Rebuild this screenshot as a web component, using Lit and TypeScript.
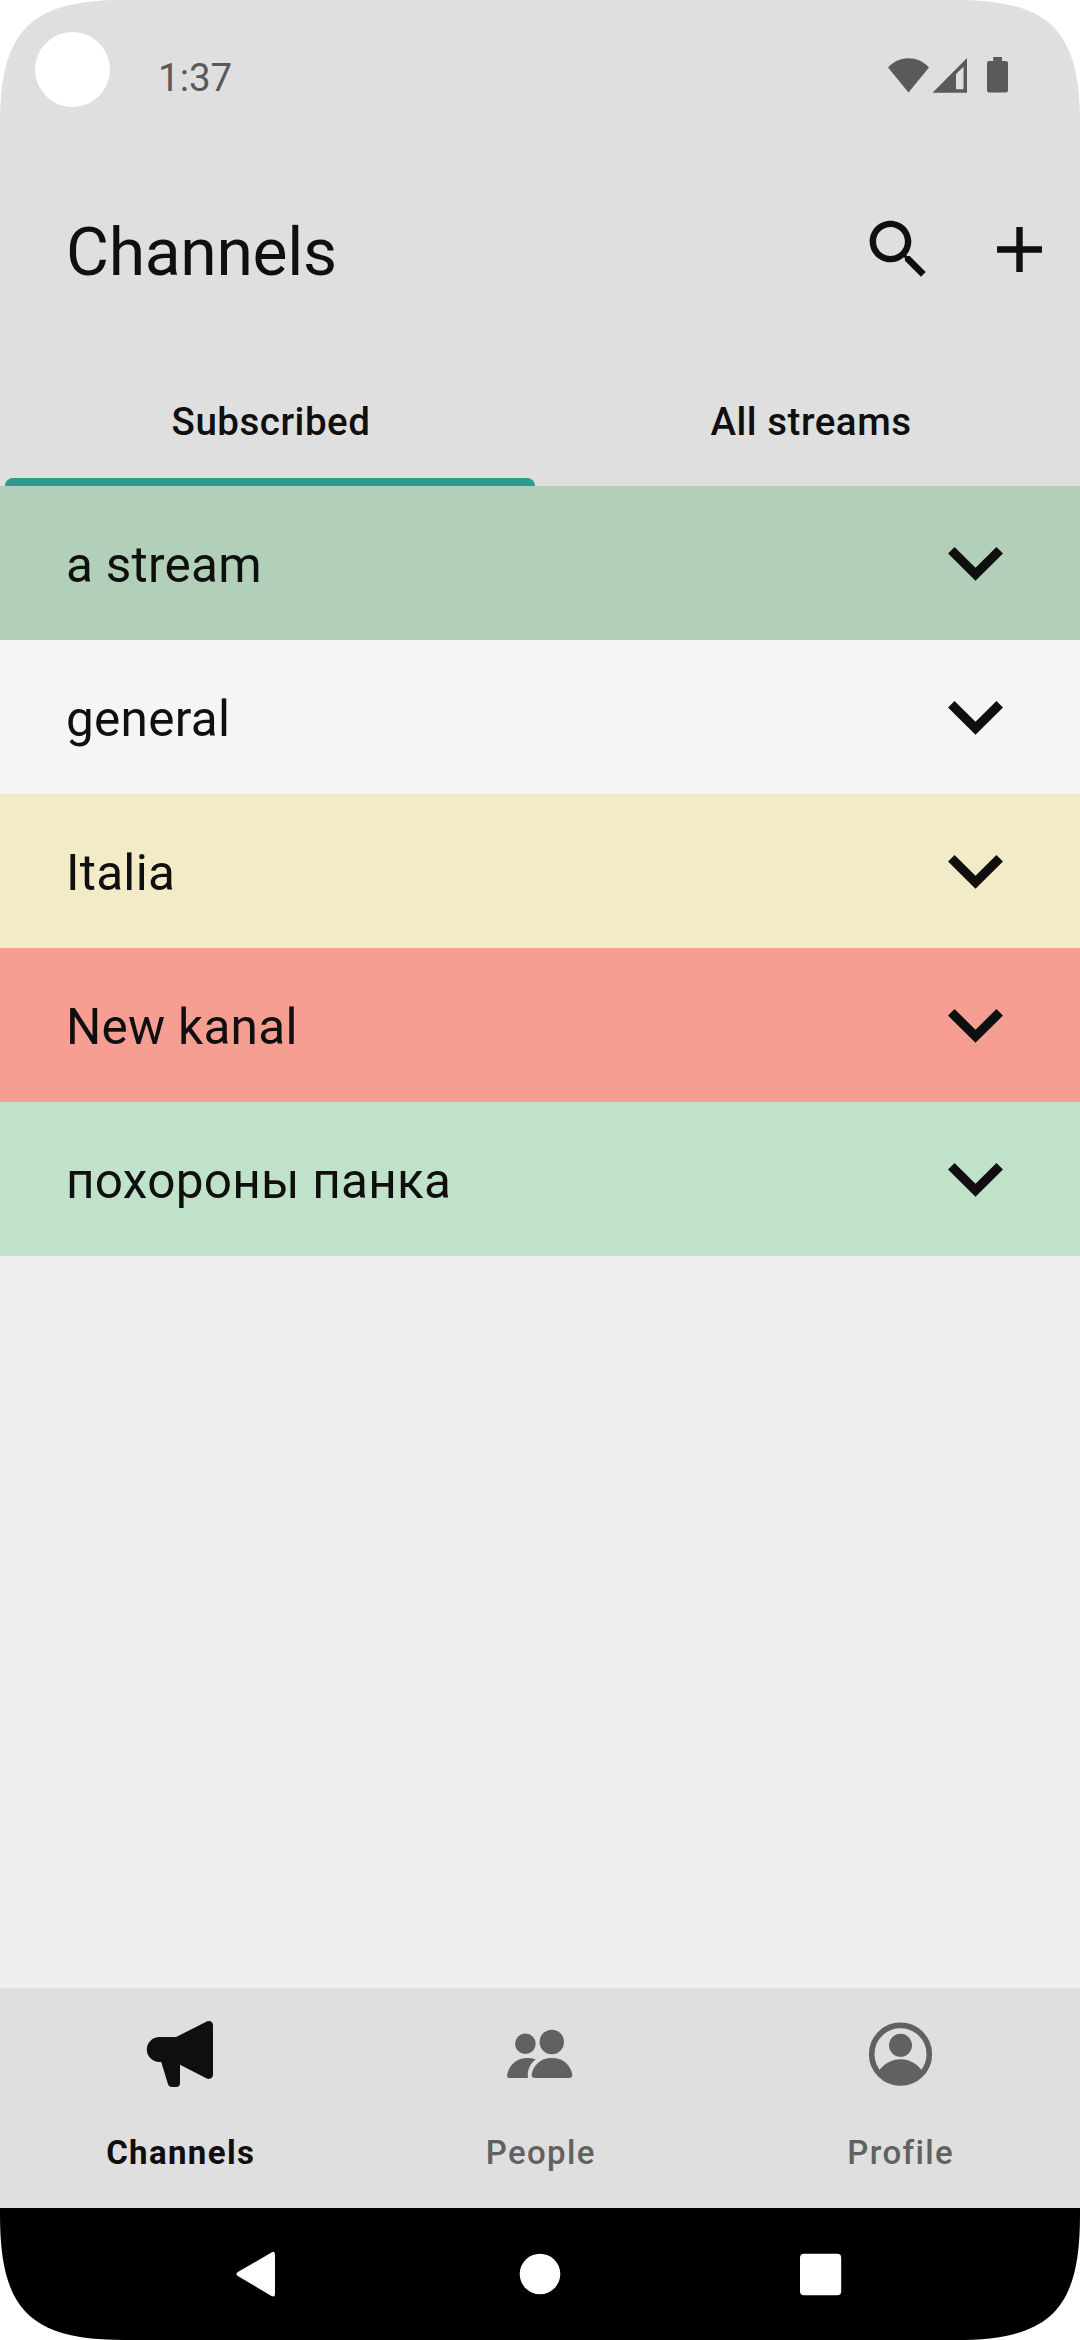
import { LitElement, html, css, svg } from "lit";
import { customElement, state } from "lit/decorators.js";
import { classMap } from "lit/directives/class-map.js";

interface Channel {
  name: string;
  tone: string;
}

const channels: Channel[] = [
  { name: "a stream", tone: "sage" },
  { name: "general", tone: "plain" },
  { name: "Italia", tone: "sand" },
  { name: "New kanal", tone: "coral" },
  { name: "похороны панка", tone: "mint" },
];

const megaphone = svg`
  <path d="M12.3 16H29L59.8 .6C62.6 -.8 66 1 66 4.2V53.8C66 57 62.6 58.8 59.8 57.4L33 43.8V62A4 4 0 0 1 29 66H25Q21.8 66 20.9 62.8L14.2 41H12.3A12.5 12.5 0 0 1 12.3 16Z"/>`;

const people = svg`
  <circle cx="18.4" cy="22.7" r="10.3"/>
  <circle cx="44.8" cy="21" r="12.2"/>
  <path d="M45 37C56.5 37 63.5 44.5 65.2 53.2Q65.8 57 62 57H28Q24.2 57 24.7 53.2C26.4 44.5 33.5 37 45 37Z"/>
  <path d="M20.5 37Q25 37 28.8 38.4C22.5 43.2 20 49.5 21 57H3Q-.4 57 .2 53.4C2 44.5 9 37 20.5 37Z"/>`;

const profile = svg`
  <circle cx="33.5" cy="33.2" r="28.8" fill="none" stroke="currentColor" stroke-width="5.6"/>
  <circle cx="33.5" cy="24.3" r="11.5"/>
  <path d="M11 51C22 34 45 34 56 51A28.8 28.8 0 0 1 11 51Z"/>`;

const navItems = [
  { label: "Channels", icon: megaphone },
  { label: "People", icon: people },
  { label: "Profile", icon: profile },
];

@customElement("app-root")
export class AppRoot extends LitElement {
  @state() private tab = 0;
  @state() private section = 0;

  static styles = css`
    :host {
      display: block;
      background: #fff;
    }
    .screen {
      display: flex;
      flex-direction: column;
      width: 1080px;
      height: 2340px;
      background: #efefef;
      color: #0f0f0f;
      font-family: Roboto, "Noto Sans", sans-serif;
      overflow: hidden;
      clip-path: path(
        "M0 125C0 30 30 0 125 0H955C1050 0 1080 30 1080 125V2215C1080 2310 1050 2340 955 2340H125C30 2340 0 2310 0 2215Z"
      );
    }
    svg {
      display: block;
      fill: currentColor;
    }
    .head {
      flex: none;
      background: #dfdfdf;
    }
    .status {
      display: flex;
      align-items: flex-start;
      box-sizing: border-box;
      height: 144px;
      padding: 32px 72px 0 35px;
      color: #5a5a5a;
    }
    .camera {
      width: 75px;
      height: 75px;
      border-radius: 50%;
      background: #fff;
    }
    .clock {
      margin-left: 48px;
      padding-top: 23px;
      font-size: 38.5px;
      line-height: 46px;
    }
    .signals {
      margin: 25px 0 0 auto;
    }
    .appbar {
      display: flex;
      align-items: center;
      gap: 44px;
      box-sizing: border-box;
      height: 210px;
      padding: 0 22px 0 66px;
    }
    .title {
      flex: 1;
      margin: 0;
      padding-top: 8px;
      font-size: 66px;
      font-weight: 400;
      letter-spacing: -0.3px;
      line-height: 78px;
    }
    .tabs {
      display: grid;
      grid-template-columns: 1fr 1fr;
      height: 132px;
    }
    .tab {
      display: flex;
      flex-direction: column;
      align-items: stretch;
      padding: 0 5px;
      text-align: center;
      font-size: 38.5px;
      font-weight: 500;
      letter-spacing: 0.52px;
      line-height: 46px;
    }
    .tab-label {
      flex: 1;
      padding: 45px 0 0 2px;
    }
    .indicator {
      height: 8px;
      border-radius: 8px 8px 0 0;
    }
    .tab.active .indicator {
      background: #2a9d8f;
    }
    .list {
      flex: 1;
    }
    .row {
      display: flex;
      align-items: center;
      justify-content: space-between;
      height: 154px;
      padding: 0 77px 0 66px;
      font-size: 49.5px;
      letter-spacing: 0.26px;
      line-height: 58px;
    }
    .name {
      padding-top: 4px;
    }
    .chevron {
      margin-top: 2px;
      fill: none;
      stroke: currentColor;
    }
    .sage {
      background: #b2d0b9;
    }
    .plain {
      background: #f5f5f5;
    }
    .sand {
      background: #f3eac8;
    }
    .coral {
      background: #f69e92;
    }
    .mint {
      background: #c0e2ca;
    }
    .bottom {
      display: grid;
      grid-template-columns: repeat(3, 1fr);
      flex: none;
      height: 220px;
      background: #dfdfdf;
    }
    .item {
      display: flex;
      flex-direction: column;
      align-items: center;
      gap: 47px;
      padding-top: 33px;
      color: #616161;
      font-size: 33px;
      font-weight: 500;
      letter-spacing: 1.375px;
      line-height: 38px;
    }
    .item span {
      padding-left: 1.5px;
    }
    .item svg {
      overflow: visible;
    }
    .item.active {
      color: #0f0f0f;
      font-weight: 700;
    }
    .system {
      display: flex;
      flex: none;
      align-items: center;
      justify-content: center;
      gap: 238px;
      height: 132px;
      background: #000;
      color: #fff;
    }
    .back,
    .home,
    .recent {
      width: 42px;
      height: 46px;
      overflow: visible;
    }
  `;

  render() {
    return html`
      <div class="screen">
        <header class="head">
          <div class="status">
            <div class="camera"></div>
            <div class="clock">1:37</div>
            <svg class="signals" width="120" height="36" viewBox="888 57 120 36">
              <path d="M908.5 92.5L888 67.5C899.5 55.3 917.5 55.3 929 67.5Z" />
              <path fill-rule="evenodd" d="M932.5 92.7L967 58V92.7ZM956 74V89.2H963.5V66.7Z" />
              <path d="M993.2 57H1002V61H1006A2 2 0 0 1 1008 63V90.5A2 2 0 0 1 1006 92.5H989A2 2 0 0 1 987 90.5V63A2 2 0 0 1 989 61H993.2Z" />
            </svg>
          </div>
          <div class="appbar">
            <h1 class="title">Channels</h1>
            <svg width="77" height="77" viewBox="0 0 24 24">
              <path d="M15.5 14h-.79l-.28-.27C15.41 12.59 16 11.11 16 9.5 16 5.91 13.09 3 9.5 3S3 5.91 3 9.5 5.91 16 9.5 16c1.61 0 3.09-.59 4.23-1.57l.27.28v.79l5 4.99L20.49 19l-4.99-5zm-6 0C7.01 14 5 11.99 5 9.5S7.01 5 9.5 5 14 7.01 14 9.5 11.99 14 9.5 14z" />
            </svg>
            <svg width="77" height="77" viewBox="0 0 24 24">
              <path d="M19 13h-6v6h-2v-6H5v-2h6V5h2v6h6v2z" />
            </svg>
          </div>
          <div class="tabs">
            ${["Subscribed", "All streams"].map(
              (label, i) => html`
                <div class=${classMap({ tab: true, active: i === this.tab })} @click=${() => (this.tab = i)}>
                  <span class="tab-label">${label}</span>
                  <span class="indicator"></span>
                </div>
              `
            )}
          </div>
        </header>
        <main class="list">
          ${channels.map(
            (c) => html`
              <div class="row ${c.tone}">
                <span class="name">${c.name}</span>
                <svg class="chevron" width="55" height="34" viewBox="0 0 55 34">
                  <path d="M3.3 3.3L27.5 27.3L51.7 3.3" stroke-width="9.3" />
                </svg>
              </div>
            `
          )}
        </main>
        <nav class="bottom">
          ${navItems.map(
            (n, i) => html`
              <div class=${classMap({ item: true, active: i === this.section })} @click=${() => (this.section = i)}>
                <svg width="66" height="66" viewBox="0 0 66 66">${n.icon}</svg>
                <span>${n.label}</span>
              </div>
            `
          )}
        </nav>
        <div class="system">
          <svg class="back" viewBox="0 0 42 46">
            <path d="M34.5 1.2Q38 -.6 38 3.5V42.5Q38 46.4 34.500 44.8L.8 24.8Q-2 22.7 .8 20.9Z" transform="translate(-2 .2)" />
          </svg>
          <svg class="home" viewBox="0 0 42 46"><circle cx="21" cy="23" r="20.300" /></svg>
          <svg class="recent" viewBox="0 0 42 46"><rect x="1" y="2.800" width="41.200" height="41.500" rx="4" /></svg>
        </div>
      </div>
    `;
  }
}
